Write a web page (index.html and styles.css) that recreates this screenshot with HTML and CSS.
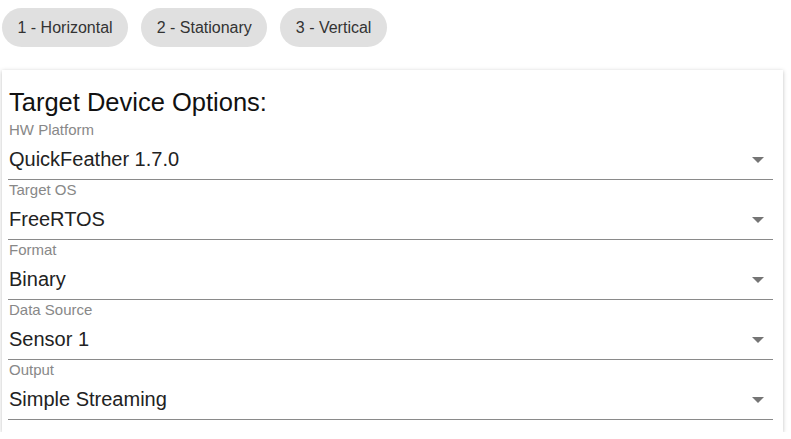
FILE: index.html
```html
<!DOCTYPE html>
<html lang="en">
<head>
    <meta charset="UTF-8">
    <meta name="viewport" content="width=device-width, initial-scale=1.0">
    <title>Target Device Options</title>
    <link rel="stylesheet" href="styles.css">
</head>
<body>
    <div class="chips">
        <button class="chip">1 - Horizontal</button>
        <button class="chip">2 - Stationary</button>
        <button class="chip">3 - Vertical</button>
    </div>
    <div class="card">
        <h2>Target Device Options:</h2>
        <div class="field">
            <label>HW Platform</label>
            <div class="select"><span>QuickFeather 1.7.0</span><i class="arrow"></i></div>
        </div>
        <div class="field">
            <label>Target OS</label>
            <div class="select"><span>FreeRTOS</span><i class="arrow"></i></div>
        </div>
        <div class="field">
            <label>Format</label>
            <div class="select"><span>Binary</span><i class="arrow"></i></div>
        </div>
        <div class="field">
            <label>Data Source</label>
            <div class="select"><span>Sensor 1</span><i class="arrow"></i></div>
        </div>
        <div class="field">
            <label>Output</label>
            <div class="select"><span>Simple Streaming</span><i class="arrow"></i></div>
        </div>
    </div>
</body>
</html>
```

FILE: styles.css
```css
body {
    font-family: "Liberation Sans", Arial, sans-serif;
    margin: 0;
    padding: 8px 8px 0 2px;
    background-color: #fff;
    color: #222;
}
.chips {
    display: flex;
    gap: 13px;
}
.chip {
    height: 39px;
    padding: 0 15.5px;
    border: none;
    border-radius: 20px;
    background-color: #e0e0e0;
    color: #333;
    font-family: inherit;
    font-size: 16px;
}
.card {
    margin-top: 23px;
    background: #fff;
    padding: 14px 10px 12px 6px;
    box-shadow: 0 1px 4px rgba(0, 0, 0, 0.25);
}
h2 {
    margin: 0;
    padding-left: 1px;
    font-size: 25.5px;
    font-weight: normal;
    line-height: 36px;
    color: #111;
}
.field label {
    display: block;
    font-size: 15px;
    line-height: 20px;
    color: #888;
    padding-left: 1px;
}
.field .select {
    display: flex;
    align-items: center;
    justify-content: space-between;
    height: 39px;
    border-bottom: 1px solid #8a8a8a;
    font-size: 20px;
    color: #222;
}
.field .select span {
    margin-top: -1px;
    padding-left: 1px;
}
.arrow {
    width: 0;
    height: 0;
    border-left: 6px solid transparent;
    border-right: 6px solid transparent;
    border-top: 6px solid #757575;
    margin-right: 9px;
}
```
